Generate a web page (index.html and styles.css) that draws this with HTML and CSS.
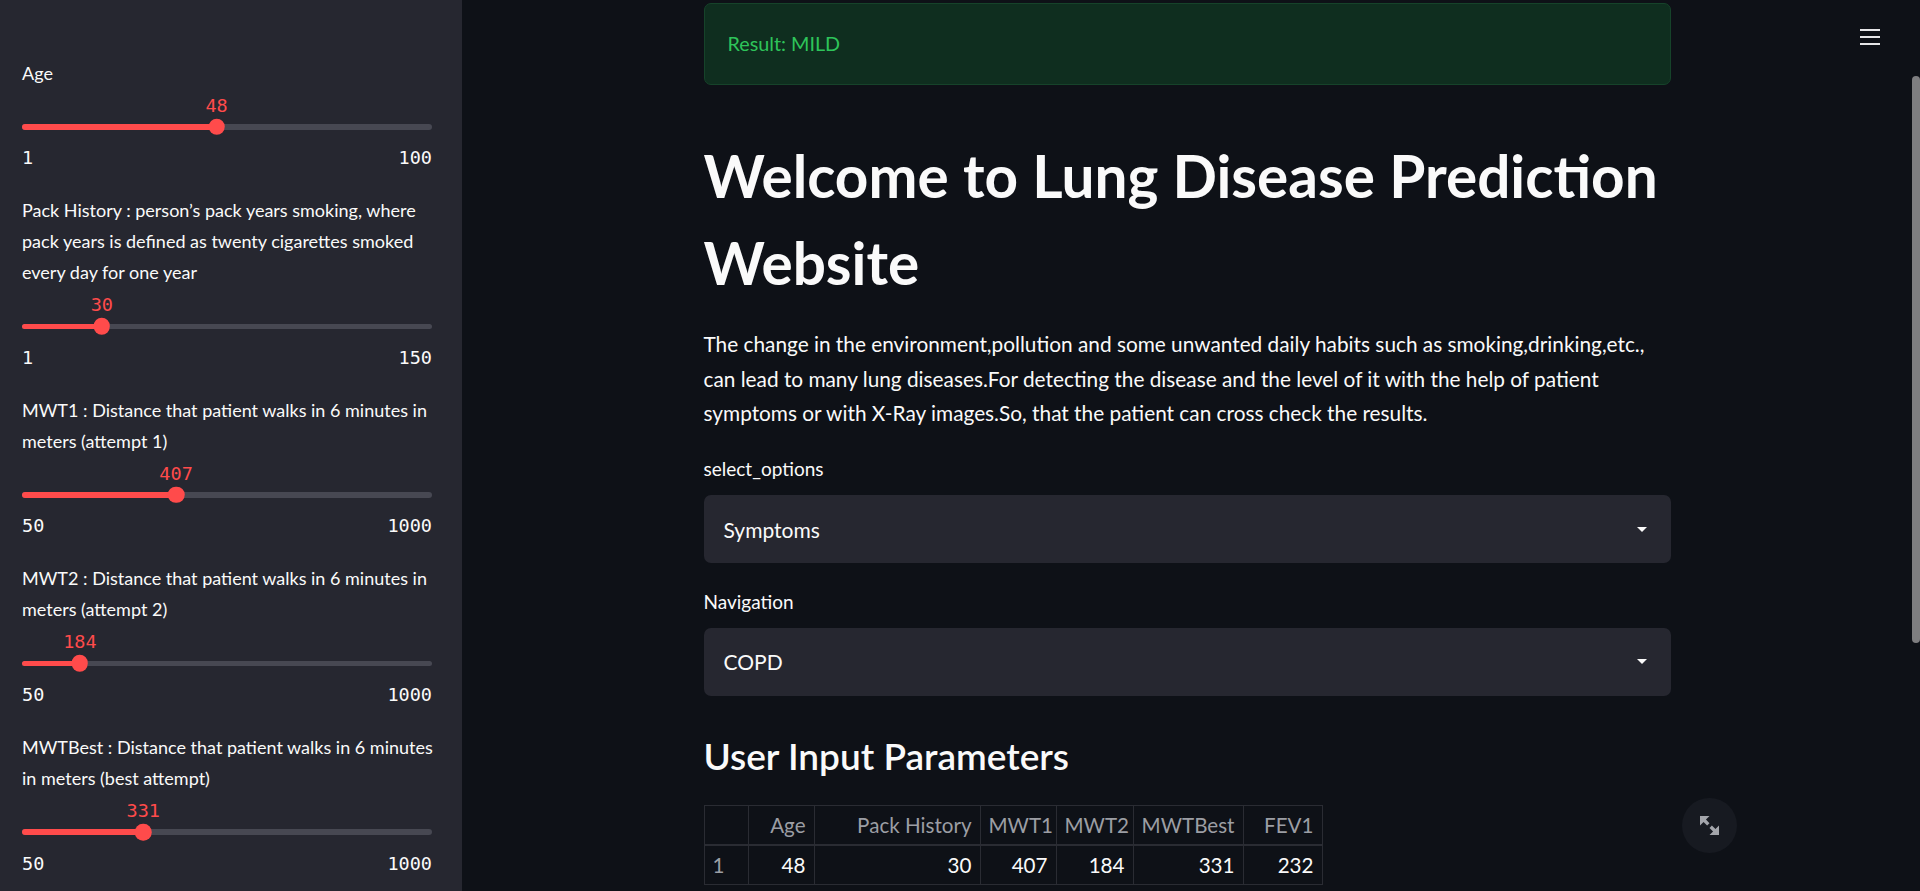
FILE: index.html
```html
<!DOCTYPE html>
<html lang="en">
<head>
<meta charset="utf-8">
<title>Lung Disease Prediction</title>
<link rel="stylesheet" href="styles.css">
</head>
<body>
<div class="app">
  <aside class="sidebar">
    <div class="widget">
      <div class="wlabel">Age</div>
      <div class="slider" style="--p:47.47%">
        <div class="val-row"><span class="val">48</span></div>
        <div class="track-wrap"><div class="track"><div class="fill"></div><div class="thumb"></div></div></div>
        <div class="ticks"><span>1</span><span>100</span></div>
      </div>
    </div>
    <div class="widget">
      <div class="wlabel">Pack History : person’s pack years smoking, where pack years is defined as twenty cigarettes smoked every day for one year</div>
      <div class="slider" style="--p:19.46%">
        <div class="val-row"><span class="val">30</span></div>
        <div class="track-wrap"><div class="track"><div class="fill"></div><div class="thumb"></div></div></div>
        <div class="ticks"><span>1</span><span>150</span></div>
      </div>
    </div>
    <div class="widget">
      <div class="wlabel">MWT1 : Distance that patient walks in 6 minutes in meters (attempt 1)</div>
      <div class="slider" style="--p:37.58%">
        <div class="val-row"><span class="val">407</span></div>
        <div class="track-wrap"><div class="track"><div class="fill"></div><div class="thumb"></div></div></div>
        <div class="ticks"><span>50</span><span>1000</span></div>
      </div>
    </div>
    <div class="widget">
      <div class="wlabel">MWT2 : Distance that patient walks in 6 minutes in meters (attempt 2)</div>
      <div class="slider" style="--p:14.11%">
        <div class="val-row"><span class="val">184</span></div>
        <div class="track-wrap"><div class="track"><div class="fill"></div><div class="thumb"></div></div></div>
        <div class="ticks"><span>50</span><span>1000</span></div>
      </div>
    </div>
    <div class="widget">
      <div class="wlabel">MWTBest : Distance that patient walks in 6 minutes in meters (best attempt)</div>
      <div class="slider" style="--p:29.58%">
        <div class="val-row"><span class="val">331</span></div>
        <div class="track-wrap"><div class="track"><div class="fill"></div><div class="thumb"></div></div></div>
        <div class="ticks"><span>50</span><span>1000</span></div>
      </div>
    </div>
    <div class="widget">
      <div class="wlabel">FEV1 : Forced expiratory volume in 1 second in liters</div>
      <div class="slider" style="--p:40%">
        <div class="val-row"><span class="val">232</span></div>
        <div class="track-wrap"><div class="track"><div class="fill"></div><div class="thumb"></div></div></div>
        <div class="ticks"><span>0</span><span>500</span></div>
      </div>
    </div>
  </aside>

  <main class="main">
    <div class="block">
      <div class="alert">Result: MILD</div>
      <h1 class="title">Welcome to Lung Disease Prediction Website</h1>
      <p class="intro">The change in the environment,pollution and some unwanted daily habits such as smoking,drinking,etc., can lead to many lung diseases.For detecting the disease and the level of it with the help of patient symptoms or with X-Ray images.So, that the patient can cross check the results.</p>
      <div class="field first">
        <div class="flabel">select_options</div>
        <div class="select"><span>Symptoms</span><svg class="caret" width="10" height="5" viewBox="0 0 10 5"><polygon points="0,0 10,0 5,5" fill="#fafafa"/></svg></div>
      </div>
      <div class="field">
        <div class="flabel">Navigation</div>
        <div class="select"><span>COPD</span><svg class="caret" width="10" height="5" viewBox="0 0 10 5"><polygon points="0,0 10,0 5,5" fill="#fafafa"/></svg></div>
      </div>
      <h3 class="subtitle">User Input Parameters</h3>
      <table class="data">
        <colgroup>
          <col class="c0"><col class="c1"><col class="c2"><col class="c3"><col class="c4"><col class="c5"><col class="c6">
        </colgroup>
        <thead>
          <tr><th></th><th>Age</th><th>Pack History</th><th>MWT1</th><th>MWT2</th><th>MWTBest</th><th>FEV1</th></tr>
        </thead>
        <tbody>
          <tr><td class="idx">1</td><td>48</td><td>30</td><td>407</td><td>184</td><td>331</td><td>232</td></tr>
        </tbody>
      </table>
    </div>
    <div class="menu" aria-label="menu"><i></i><i></i><i></i></div>
    <div class="scrollbar"></div>
    <button class="fullscreen" aria-label="View fullscreen">
      <svg width="19" height="19" viewBox="0 0 8 8"><path fill="#a3a5ab" d="M0 0v4l1.5-1.5 1.5 1.5 1-1-1.5-1.5 1.5-1.5h-4zm5 4l-1 1 1.5 1.5-1.5 1.5h4v-4l-1.5 1.5-1.5-1.5z"/></svg>
    </button>
  </main>
</div>
</body>
</html>
```
FILE: styles.css
```css
* { box-sizing: border-box; }
html, body { margin: 0; padding: 0; }
body {
  background: #0e1117;
  color: #fafafa;
  font-family: Lato, "Noto Sans", "DejaVu Sans", sans-serif;
  overflow: hidden;
  height: 891px;
}
.app { display: flex; height: 891px; overflow: hidden; }

/* Sidebar */
.sidebar {
  width: 462px;
  flex: none;
  background: #262730;
  padding: 57.6px 22px 0 22px;
  overflow: hidden;
}
.widget { margin-bottom: 27px; }
.wlabel {
  font-size: 18px;
  line-height: 30.8px;
  color: #fafafa;
}
.slider { width: 410px; }
.val-row { position: relative; height: 33px; }
.val {
  position: absolute;
  top: 7.4px;
  left: var(--p);
  transform: translateX(-50%);
  font-family: "DejaVu Sans Mono", "Liberation Mono", monospace;
  font-size: 18.5px;
  line-height: 20px;
  color: #ff4b4b;
}
.track-wrap { height: 11px; display: flex; align-items: center; }
.track {
  position: relative;
  width: 100%;
  height: 5.5px;
  border-radius: 3px;
  background: #474852;
}
.fill {
  position: absolute;
  left: 0; top: 0; bottom: 0;
  width: var(--p);
  background: #ff4b4b;
  border-radius: 3px 0 0 3px;
}
.thumb {
  position: absolute;
  left: var(--p);
  top: 50%;
  width: 16.5px;
  height: 16.5px;
  border-radius: 50%;
  background: #ff4b4b;
  transform: translate(-50%, -50%);
}
.ticks {
  margin-top: 16px;
  display: flex;
  justify-content: space-between;
  font-family: "DejaVu Sans Mono", "Liberation Mono", monospace;
  font-size: 18.5px;
  line-height: 20px;
  color: #fafafa;
}

/* Main */
.main {
  flex: 1;
  position: relative;
  display: flex;
  justify-content: center;
  padding-right: 8px;
}
.block { width: 967px; padding-top: 3.3px; }
.alert {
  border: 1px solid #16432a;
  background: #0f2e1f;
  border-radius: 7px;
  padding: 22px 23px;
  font-size: 19.8px;
  line-height: 35.2px;
  color: #2ec45a;
}
.title {
  margin: 47.8px 0 0;
  font-size: 58.5px;
  line-height: 87px;
  font-weight: 700;
  color: #fafafa;
}
.intro {
  margin: 21px 0 0;
  font-size: 20.8px;
  line-height: 34.2px;
}
.field.first { margin-top: 26px; }
.field { margin-top: 25.7px; }
.flabel {
  font-size: 19px;
  line-height: 26px;
}
.select {
  margin-top: 13.2px;
  height: 68px;
  background: #262730;
  border-radius: 7px;
  display: flex;
  align-items: center;
  justify-content: space-between;
  padding: 0 24px 0 20px;
  font-size: 21px;
}
.caret { display: block; }
.subtitle {
  margin: 36px 0 0;
  font-size: 37px;
  line-height: 48px;
  font-weight: 600;
}
.data {
  margin-top: 25.5px;
  border-collapse: collapse;
  table-layout: fixed;
  width: 618px;
  font-size: 20.6px;
}
.c0 { width: 44px; }
.c1 { width: 66px; }
.c2 { width: 166px; }
.c3 { width: 76px; }
.c4 { width: 77px; }
.c5 { width: 110px; }
.c6 { width: 79px; }
.data th, .data td {
  border: 1px solid #2a2c33;
  text-align: right;
  padding: 0 8px;
  font-weight: 400;
  white-space: nowrap;
}
.data th {
  height: 39px;
  color: #9c9ea4;
  border-bottom-width: 2px;
}
.data td { height: 40px; color: #fafafa; }
.data td.idx { text-align: left; color: #9c9ea4; }

.menu {
  position: absolute;
  top: 28.5px;
  left: 1398px;
  width: 20px;
  display: flex;
  flex-direction: column;
  gap: 5px;
}
.menu i { display: block; height: 2px; background: #e6e6e8; }
.scrollbar {
  position: absolute;
  top: 76px;
  right: 0;
  width: 8px;
  height: 567px;
  border-radius: 4px;
  background: #7e7e80;
}
.fullscreen {
  position: absolute;
  left: 1219.5px;
  top: 797.5px;
  width: 55px;
  height: 55px;
  border-radius: 50%;
  border: none;
  background: #171a21;
  display: flex;
  align-items: center;
  justify-content: center;
  padding: 0;
}
.fullscreen svg { display: block; }
```
